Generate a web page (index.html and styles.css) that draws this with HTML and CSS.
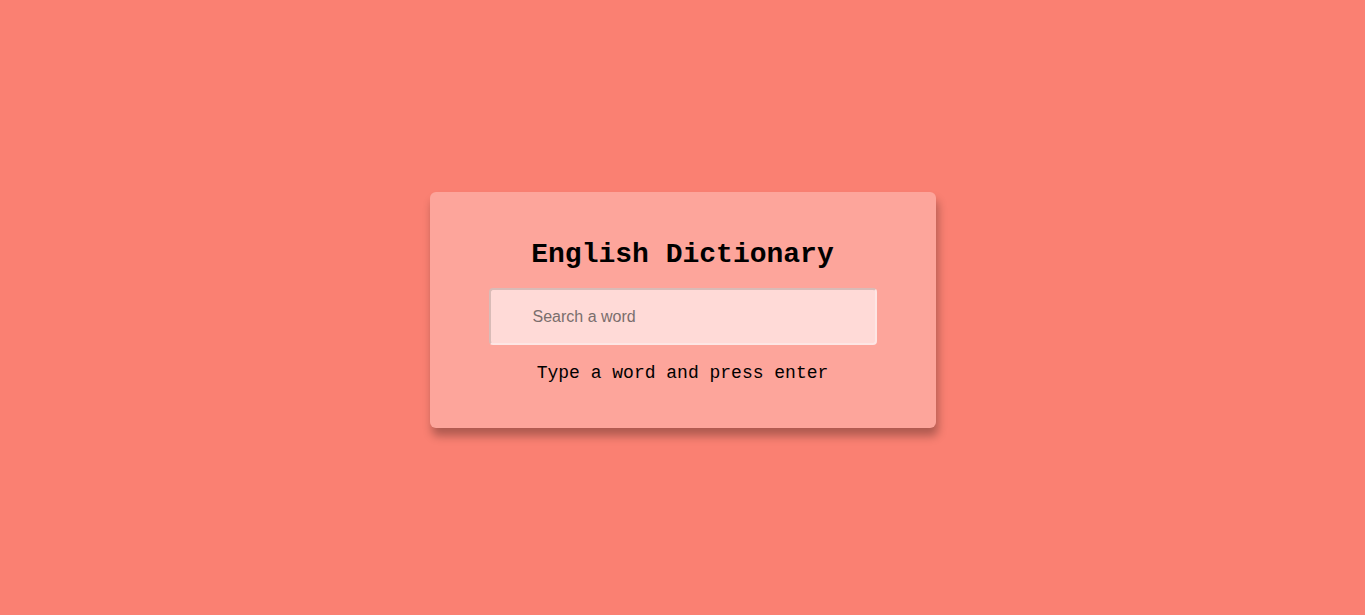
FILE: index.html
```html
<!DOCTYPE html>
<html lang="en">
<head>
<meta charset="utf-8">
<title>English Dictionary</title>
<link rel="stylesheet" href="styles.css">
</head>
<body>
  <main class="container">
    <h1 class="title">English Dictionary</h1>
    <input class="search" type="text" placeholder="Search a word">
    <p class="info">Type a word and press enter</p>
  </main>
</body>
</html>
```
FILE: styles.css
```css
html, body {
  margin: 0;
  padding: 0;
}
body {
  background: #fa8072;
  height: 615px;
  display: flex;
  align-items: center;
  justify-content: center;
  font-family: "Liberation Mono", "Courier New", monospace;
}
.container {
  box-sizing: border-box;
  width: 506px;
  height: 236px;
  margin-top: 5px;
  background: #fda59b;
  border-radius: 6px;
  box-shadow: 2px 8px 10px rgba(0, 0, 0, 0.3);
  display: flex;
  flex-direction: column;
  align-items: center;
  padding-top: 47px;
}
.title {
  margin: 0;
  font-size: 28px;
  line-height: 32px;
  font-weight: bold;
  color: #000;
}
.search {
  box-sizing: border-box;
  margin-top: 17px;
  width: 388px;
  height: 57px;
  border: 2px solid;
  border-color: #d9bbb7 #fde6e4 #fde6e4 #d9bbb7;
  border-radius: 4px;
  background: #ffdad7;
  padding: 0 0 0 42px;
  font-family: "Liberation Sans", Arial, sans-serif;
  font-size: 16px;
  color: #333;
  outline: none;
}
.search::placeholder {
  color: #7a6e6d;
}
.info {
  margin: 18px 0 0;
  font-size: 18px;
  line-height: 20px;
  color: #000;
}
```
